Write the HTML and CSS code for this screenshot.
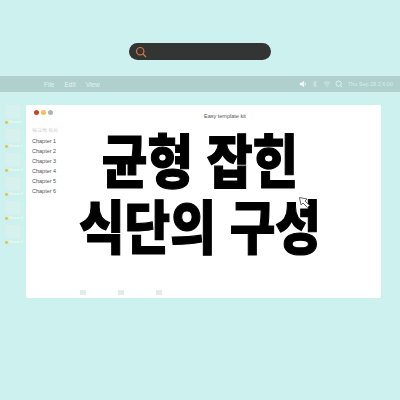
FILE: index.html
```html
<!DOCTYPE html>
<html lang="ko">
<head>
<meta charset="utf-8">
<title>균형 잡힌 식단의 구성</title>
<link rel="stylesheet" href="styles.css">
</head>
<body>
<div class="page">
  <div class="search-row">
    <div class="search">
      <svg class="search-icon" viewBox="0 0 12 12" width="12" height="12"><circle cx="5.200" cy="5.200" r="3.700" fill="none" stroke="#d9733a" stroke-width="1.200"/><path d="M8 8l3 3" stroke="#d9733a" stroke-width="1.300" fill="none"/></svg>
    </div>
  </div>
  <div class="menubar">
    <nav class="menus"><span>File</span><span>Edit</span><span>View</span></nav>
    <div class="status">
      <svg viewBox="0 0 10 10" width="8" height="8"><path d="M1 3.500h2L6.500 1v8L3 6.500H1z" fill="#eef8f7"/><path d="M8 3.500v3" stroke="#eef8f7" stroke-width="1"/></svg>
      <svg viewBox="0 0 10 10" width="8" height="8"><path d="M2.500 3l4.500 4-2 2V1l2 2-4.500 4" fill="none" stroke="#d5e8e6" stroke-width="1"/></svg>
      <svg viewBox="0 0 10 10" width="8" height="8"><path d="M1 4a6 6 0 0 1 8 0M2.500 5.800a4 4 0 0 1 5 0M5 9v-2" fill="none" stroke="#d5e8e6" stroke-width="1.200"/></svg>
      <svg viewBox="0 0 10 10" width="8" height="8"><circle cx="4.500" cy="4.500" r="3.300" fill="none" stroke="#e4f2f0" stroke-width="1.200"/><path d="M7 7l2 2" stroke="#e4f2f0" stroke-width="1.200"/></svg>
      <span class="clock">Thu Sep 28 2 6:00</span>
    </div>
  </div>
  <div class="desktop">
    <aside class="icons">
      <div class="item"><i class="thumb"></i><span class="lbl"><b></b>Recent</span></div>
      <div class="item"><i class="thumb"></i><span class="lbl"><b></b>Name 1</span></div>
      <div class="item"><i class="thumb"></i><span class="lbl"><b></b>Name 2</span></div>
      <div class="item"><i class="thumb"></i><span class="lbl"><b></b>Name 3</span></div>
      <div class="item"><i class="thumb"></i><span class="lbl"><b></b>Name 4</span></div>
      <div class="item"><i class="thumb"></i><span class="lbl"><b></b>Name 5</span></div>
    </aside>
    <main class="window">
      <header class="titlebar">
        <div class="lights"><i class="red"></i><i class="yellow"></i><i class="gray"></i></div>
        <div class="wintitle">Easy template kit</div>
      </header>
      <div class="body">
        <div class="toc">
          <div class="toc-head">워크북 목차</div>
          <div>Chapter 1</div>
          <div>Chapter 2</div>
          <div>Chapter 3</div>
          <div>Chapter 4</div>
          <div>Chapter 5</div>
          <div>Chapter 6</div>
        </div>
      </div>
      <div class="dock"><i></i><i></i><i></i></div>
    </main>
  </div>
  <h1 class="headline">균형 잡힌<br>식단의 구성</h1>
  <svg class="cursor" viewBox="0 0 13 13" width="13" height="13"><path d="M1.500 1.500L9 3 7 5l4.500 4.500-2 2L5 7 3 9z" fill="#fff" stroke="#666" stroke-width="1"/></svg>
</div>
</body>
</html>
```
FILE: styles.css
```css
* { box-sizing: border-box; }
html, body { margin: 0; padding: 0; }
body { width: 400px; height: 400px; overflow: hidden; background: #cdf1ee; font-family: "Liberation Sans", Arial, sans-serif; }
.page { position: relative; width: 400px; height: 400px; padding-top: 43px; }
.search-row { display: flex; justify-content: center; }
.search { width: 142px; height: 17px; border-radius: 9px; background: #333534; display: flex; align-items: center; padding-left: 6px; }
.search-icon { display: block; }
.menubar { margin-top: 16px; height: 16px; background: #afd0cd; display: flex; justify-content: space-between; align-items: center; padding: 0 7px 0 44px; }
.menus { display: flex; gap: 10px; font-size: 6.500px; color: #e2f2f0; }
.status { display: flex; align-items: center; gap: 4px; }
.status svg { display: block; }
.clock { font-size: 5.500px; color: #d8ecea; white-space: nowrap; margin-left: 1px; }
.desktop { display: flex; margin-top: 13px; height: 193px; padding-right: 19px; }
.icons { width: 26px; padding: 0 0 0 4px; display: flex; flex-direction: column; gap: 5px; }
.item { display: flex; flex-direction: column; align-items: center; width: 18px; }
.thumb { display: block; width: 14px; height: 13px; background: #d6f1ee; border-radius: 1px; }
.lbl { align-self: flex-start; margin: 2px 0 0 1px; font-size: 4px; line-height: 4px; height: 4px; color: #fbfbea; display: flex; align-items: center; gap: 1px; white-space: nowrap; }
.lbl b { width: 3px; height: 3px; background: #e8c262; border-radius: 1px; flex: none; }
.window { flex: 1; background: #fff; border-radius: 2px; display: flex; flex-direction: column; }
.titlebar { height: 18px; flex: none; display: flex; align-items: flex-start; }
.lights { display: flex; gap: 2px; padding: 5px 0 0 8px; }
.lights i { display: block; width: 5px; height: 5px; border-radius: 50%; }
.red { background: #c9442d; }
.yellow { background: #eec254; }
.gray { background: #a9b9ae; }
.wintitle { margin: 7px 0 0 151px; font-size: 5.500px; line-height: 8px; color: #555; white-space: nowrap; }
.body { flex: 1; padding: 2px 0 0 6px; }
.toc { font-size: 5.500px; line-height: 10px; color: #555; }
.toc-head { color: #c4c4c4; font-size: 4.500px; line-height: 11px; }
.dock { flex: none; height: 8px; display: flex; gap: 32px; padding-left: 54px; }
.dock i { display: block; width: 6px; height: 5px; background: #e2ebe8; }
.headline { position: absolute; left: 0; top: 125px; width: 400px; margin: 0; text-align: center; font-family: "Noto Sans CJK KR", sans-serif; font-weight: 900; font-size: 58px; line-height: 66px; color: #000; -webkit-text-stroke: 1.2px #000; transform: scaleX(.855); }
.cursor { position: absolute; left: 298px; top: 196px; }
```
